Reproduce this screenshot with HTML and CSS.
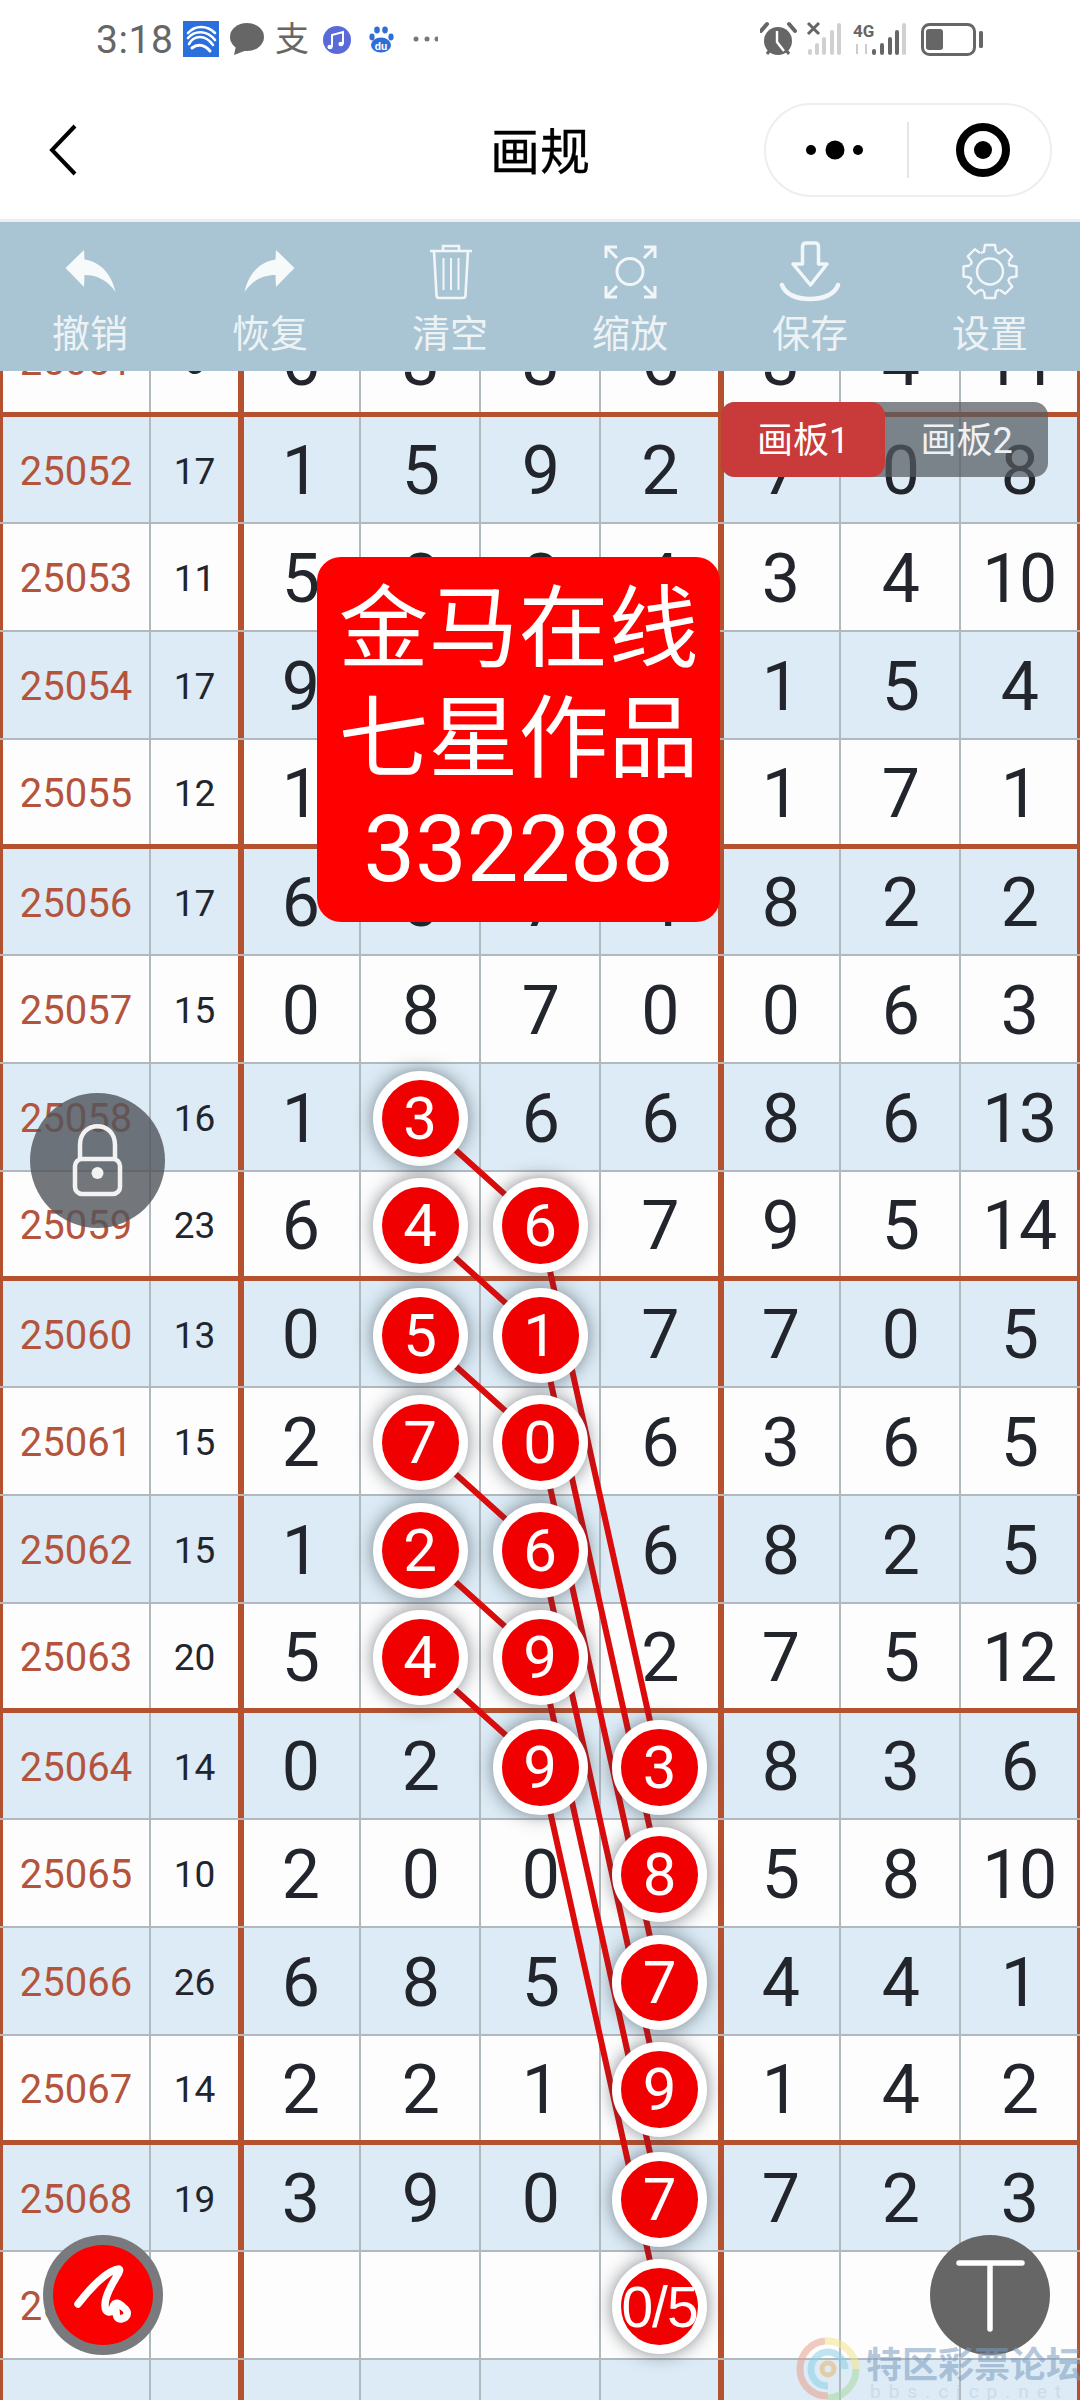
FILE: index.html
```html
<!DOCTYPE html>
<html lang="zh-CN">
<head>
<meta charset="utf-8">
<title>画规</title>
<link rel="stylesheet" href="styles.css">
</head>
<body>
<div class="app">
  <header class="status">
    <span class="time">3:18</span>
    <svg class="st-left" width="255" height="36" viewBox="183 21 255 36">
      <rect x="183" y="21" width="36" height="36" fill="#2a6fdb"/>
      <g fill="none" stroke="#fff" stroke-linecap="round">
        <path d="M188 33C195 25 207 25 215 33" stroke-width="2.6"/>
        <path d="M188 38C195 30 207 30 215 40" stroke-width="2.6"/>
        <path d="M189 44C194 35 205 34 213 45" stroke-width="2.6"/>
        <path d="M192 48C198 43 205 45 210 51" stroke-width="3"/>
      </g>
      <ellipse cx="247" cy="37" rx="17" ry="14" fill="#666"/>
      <path d="M236 46L234 55L247 50Z" fill="#666"/>
      <text x="275" y="51" class="st-zhi">支</text>
      <circle cx="337" cy="40" r="14" fill="#5a6ad8"/>
      <path d="M332 47V35L343 32V44" fill="none" stroke="#fff" stroke-width="2"/>
      <ellipse cx="330" cy="47" rx="2.6" ry="2.2" fill="#fff"/>
      <ellipse cx="341" cy="44" rx="2.6" ry="2.2" fill="#fff"/>
      <g fill="#2d6fd6">
        <ellipse cx="372" cy="37" rx="2.6" ry="3.4"/>
        <ellipse cx="377" cy="30" rx="2.8" ry="3.4"/>
        <ellipse cx="385" cy="30" rx="2.8" ry="3.4"/>
        <ellipse cx="391" cy="37" rx="2.6" ry="3.4"/>
        <ellipse cx="381" cy="45" rx="10" ry="7.6"/>
      </g>
      <text x="381" y="50" class="st-du">du</text>
      <g fill="#777">
        <circle cx="416" cy="39" r="2.5"/>
        <circle cx="427" cy="39" r="2.5"/>
        <circle cx="437" cy="39" r="2.5"/>
      </g>
    </svg>
    <svg class="st-right" width="224" height="36" viewBox="760 21 224 36">
      <circle cx="778" cy="41" r="14" fill="#666"/>
      <path d="M761 31L767 24M795 31L789 24" stroke="#666" stroke-width="4" stroke-linecap="round"/>
      <path d="M767 54L770 50M789 54L786 50" stroke="#666" stroke-width="3"/>
      <path d="M777 31V42L784 51" fill="none" stroke="#fff" stroke-width="2.4"/>
      <path d="M808 23L819 34M819 23L808 34" stroke="#666" stroke-width="3"/>
      <g fill="#d0d0d0">
        <rect x="808" y="49" width="4" height="6" rx="2"/>
        <rect x="815" y="43" width="4" height="12" rx="2"/>
        <rect x="822" y="37" width="4" height="18" rx="2"/>
        <rect x="830" y="30" width="4" height="25" rx="2"/>
        <rect x="837" y="23" width="4" height="32" rx="2"/>
      </g>
      <text x="853" y="37" class="st-4g">4G</text>
      <path d="M857 44V54M866 44V54" stroke="#ccc" stroke-width="2"/>
      <g fill="#666">
        <rect x="872" y="49" width="4" height="6" rx="2"/>
        <rect x="880" y="43" width="4" height="12" rx="2"/>
        <rect x="888" y="37" width="4" height="18" rx="2"/>
        <rect x="895" y="30" width="4" height="25" rx="2"/>
      </g>
      <rect x="902" y="23" width="4" height="32" rx="2" fill="#d0d0d0"/>
      <rect x="922.5" y="24.5" width="52" height="30" rx="7" fill="none" stroke="#666" stroke-width="3"/>
      <rect x="926" y="29" width="17" height="21" rx="3" fill="#666"/>
      <rect x="979" y="31" width="4" height="17" rx="1.5" fill="#666"/>
    </svg>
  </header>

  <nav class="nav">
    <svg class="back" width="30" height="52" viewBox="0 0 30 52">
      <path d="M26 2L3 26L26 50" fill="none" stroke="#000" stroke-width="4"/>
    </svg>
    <h1 class="title">画规</h1>
    <div class="capsule">
      <svg width="284" height="90" viewBox="766 105 284 90">
        <circle cx="811" cy="150" r="5"/>
        <circle cx="835" cy="150" r="9.5"/>
        <circle cx="858" cy="150" r="5"/>
        <rect x="907" y="122" width="2" height="56" fill="#e5e5e5"/>
        <circle cx="983" cy="150" r="23" fill="none" stroke="#000" stroke-width="8"/>
        <circle cx="983" cy="150" r="9"/>
      </svg>
    </div>
  </nav>

  <section class="toolbar">
    <div class="tool">
      <svg class="icon" width="60" height="60" viewBox="0 0 60 60">
        <path class="solid" d="M5.5 28L24 10L24.5 19.5C42 22 52 36 55.5 52C48 41 38 35 24.5 35L24 47Z"/>
      </svg>
      <span class="label">撤销</span>
    </div>
    <div class="tool">
      <svg class="icon" width="60" height="60" viewBox="0 0 60 60">
        <path class="solid" d="M54.500 28L36 10L35.500 19.500C18 22 8 36 4.500 52C12 41 22 35 35.500 35L36 47Z"/>
      </svg>
      <span class="label">恢复</span>
    </div>
    <div class="tool">
      <svg class="icon" width="60" height="60" viewBox="420 240 60 60">
        <g class="line" stroke-width="2.600">
          <path d="M430 251H472"/>
          <path d="M443 251V246H459V251"/>
          <path d="M434 251L436.500 295Q436.500 298 439 298H463Q465.500 298 465.500 295L468 251"/>
          <path d="M443.500 258V290M451 258V290M458.500 258V290" stroke-width="2"/>
        </g>
      </svg>
      <span class="label">清空</span>
    </div>
    <div class="tool">
      <svg class="icon" width="60" height="60" viewBox="600 240 60 60">
        <g class="line" stroke-width="3">
          <circle cx="630" cy="271.500" r="13"/>
          <path d="M606 258V247H617M606 247L617 258"/>
          <path d="M655 258V247H644M655 247L644 258"/>
          <path d="M606 286V297H617M606 297L617 286"/>
          <path d="M655 286V297H644M655 297L644 286"/>
        </g>
      </svg>
      <span class="label">缩放</span>
    </div>
    <div class="tool">
      <svg class="icon" width="60" height="60" viewBox="780 240 60 60">
        <g class="line" stroke-linejoin="round">
          <path stroke-width="3.500" d="M802.500 264V247Q802.500 243 806 243H815Q818.500 243 818.500 247V264H827L810.500 285L793 264Z"/>
          <path stroke-width="4.500" stroke-linecap="round" d="M782 285C785 294 796 299 810 299C824 299 835 294 838 285"/>
        </g>
      </svg>
      <span class="label">保存</span>
    </div>
    <div class="tool">
      <svg class="icon" width="60" height="60" viewBox="-30 -31.500 60 60">
        <g class="line" stroke-width="2.400" stroke-linejoin="round">
          <circle r="13"/>
          <circle r="20.500" stroke-dasharray="4.100 12" stroke-dashoffset="-6"/>
          <path d="M-6 -20L-5 -26.500H5L6 -20"/>
          <path d="M-6 -20L-5 -26.500H5L6 -20" transform="rotate(45)"/>
          <path d="M-6 -20L-5 -26.500H5L6 -20" transform="rotate(90)"/>
          <path d="M-6 -20L-5 -26.500H5L6 -20" transform="rotate(135)"/>
          <path d="M-6 -20L-5 -26.500H5L6 -20" transform="rotate(180)"/>
          <path d="M-6 -20L-5 -26.500H5L6 -20" transform="rotate(225)"/>
          <path d="M-6 -20L-5 -26.500H5L6 -20" transform="rotate(270)"/>
          <path d="M-6 -20L-5 -26.500H5L6 -20" transform="rotate(315)"/>
        </g>
      </svg>
      <span class="label">设置</span>
    </div>
  </section>

  <main class="board">
    <div class="sheet">
      <div class="row r4"><div class="c id">25051</div><div class="c sum">6</div><div class="c n">6</div><div class="c n">3</div><div class="c n">3</div><div class="c n">6</div><div class="c n">3</div><div class="c n">4</div><div class="c n">11</div></div>

      <div class="row r1 blue"><div class="c id">25052</div><div class="c sum">17</div><div class="c n">1</div><div class="c n">5</div><div class="c n">9</div><div class="c n">2</div><div class="c n">7</div><div class="c n">0</div><div class="c n">8</div></div>
      <div class="row r2"><div class="c id">25053</div><div class="c sum">11</div><div class="c n">5</div><div class="c n">8</div><div class="c n">8</div><div class="c n">4</div><div class="c n">3</div><div class="c n">4</div><div class="c n">10</div></div>
      <div class="row r3 blue"><div class="c id">25054</div><div class="c sum">17</div><div class="c n">9</div><div class="c n">2</div><div class="c n">3</div><div class="c n">3</div><div class="c n">1</div><div class="c n">5</div><div class="c n">4</div></div>
      <div class="row r4"><div class="c id">25055</div><div class="c sum">12</div><div class="c n">1</div><div class="c n">4</div><div class="c n">6</div><div class="c n">1</div><div class="c n">1</div><div class="c n">7</div><div class="c n">1</div></div>

      <div class="row r1 blue"><div class="c id">25056</div><div class="c sum">17</div><div class="c n">6</div><div class="c n">0</div><div class="c n">7</div><div class="c n">4</div><div class="c n">8</div><div class="c n">2</div><div class="c n">2</div></div>
      <div class="row r2"><div class="c id">25057</div><div class="c sum">15</div><div class="c n">0</div><div class="c n">8</div><div class="c n">7</div><div class="c n">0</div><div class="c n">0</div><div class="c n">6</div><div class="c n">3</div></div>
      <div class="row r3 blue"><div class="c id">25058</div><div class="c sum">16</div><div class="c n">1</div><div class="c n"><span class="ball">3</span></div><div class="c n">6</div><div class="c n">6</div><div class="c n">8</div><div class="c n">6</div><div class="c n">13</div></div>
      <div class="row r4"><div class="c id">25059</div><div class="c sum">23</div><div class="c n">6</div><div class="c n"><span class="ball">4</span></div><div class="c n"><span class="ball">6</span></div><div class="c n">7</div><div class="c n">9</div><div class="c n">5</div><div class="c n">14</div></div>

      <div class="row r1 blue"><div class="c id">25060</div><div class="c sum">13</div><div class="c n">0</div><div class="c n"><span class="ball">5</span></div><div class="c n"><span class="ball">1</span></div><div class="c n">7</div><div class="c n">7</div><div class="c n">0</div><div class="c n">5</div></div>
      <div class="row r2"><div class="c id">25061</div><div class="c sum">15</div><div class="c n">2</div><div class="c n"><span class="ball">7</span></div><div class="c n"><span class="ball">0</span></div><div class="c n">6</div><div class="c n">3</div><div class="c n">6</div><div class="c n">5</div></div>
      <div class="row r3 blue"><div class="c id">25062</div><div class="c sum">15</div><div class="c n">1</div><div class="c n"><span class="ball">2</span></div><div class="c n"><span class="ball">6</span></div><div class="c n">6</div><div class="c n">8</div><div class="c n">2</div><div class="c n">5</div></div>
      <div class="row r4"><div class="c id">25063</div><div class="c sum">20</div><div class="c n">5</div><div class="c n"><span class="ball">4</span></div><div class="c n"><span class="ball">9</span></div><div class="c n">2</div><div class="c n">7</div><div class="c n">5</div><div class="c n">12</div></div>

      <div class="row r1 blue"><div class="c id">25064</div><div class="c sum">14</div><div class="c n">0</div><div class="c n">2</div><div class="c n"><span class="ball">9</span></div><div class="c n"><span class="ball">3</span></div><div class="c n">8</div><div class="c n">3</div><div class="c n">6</div></div>
      <div class="row r2"><div class="c id">25065</div><div class="c sum">10</div><div class="c n">2</div><div class="c n">0</div><div class="c n">0</div><div class="c n"><span class="ball">8</span></div><div class="c n">5</div><div class="c n">8</div><div class="c n">10</div></div>
      <div class="row r3 blue"><div class="c id">25066</div><div class="c sum">26</div><div class="c n">6</div><div class="c n">8</div><div class="c n">5</div><div class="c n"><span class="ball">7</span></div><div class="c n">4</div><div class="c n">4</div><div class="c n">1</div></div>
      <div class="row r4"><div class="c id">25067</div><div class="c sum">14</div><div class="c n">2</div><div class="c n">2</div><div class="c n">1</div><div class="c n"><span class="ball">9</span></div><div class="c n">1</div><div class="c n">4</div><div class="c n">2</div></div>

      <div class="row r1 blue"><div class="c id">25068</div><div class="c sum">19</div><div class="c n">3</div><div class="c n">9</div><div class="c n">0</div><div class="c n"><span class="ball">7</span></div><div class="c n">7</div><div class="c n">2</div><div class="c n">3</div></div>
      <div class="row r2"><div class="c id">25069</div><div class="c sum"></div><div class="c n"></div><div class="c n"></div><div class="c n"></div><div class="c n"><span class="ball frac">0/5</span></div><div class="c n"></div><div class="c n"></div><div class="c n"></div></div>
      <div class="row r3 blue"><div class="c id"></div><div class="c sum"></div><div class="c n"></div><div class="c n"></div><div class="c n"></div><div class="c n"></div><div class="c n"></div><div class="c n"></div><div class="c n"></div></div>

      <svg class="links" width="1080" height="2092" viewBox="0 308 1080 2092">
        <g stroke="#dc0c0c" stroke-width="6" fill="none">
          <path d="M420 1118L540 1226M420 1226L540 1334M420 1334L540 1442M420 1442L540 1550M420 1550L540 1658M420 1658L540 1766"/>
          <path d="M540 1226L660 1766M540 1334L660 1874M540 1442L660 1982M540 1550L660 2090M540 1658L660 2198M540 1766L660 2306"/>
        </g>
      </svg>
    </div>

    <div class="tabs">
      <div class="tab active">画板1</div>
      <div class="tab">画板2</div>
    </div>

    <div class="promo">
      <div>金马在线</div>
      <div>七星作品</div>
      <div class="promo-num">332288</div>
    </div>

    <div class="fab lock">
      <svg width="135" height="135" viewBox="0 0 135 135">
        <g fill="none" stroke="#f2f2f2" stroke-width="4.500">
          <rect x="45" y="66" width="45" height="35" rx="7"/>
          <path d="M50 66V52C50 27 85 27 85 52V66"/>
        </g>
        <circle cx="67.500" cy="80" r="6" fill="#f2f2f2"/>
      </svg>
    </div>

    <div class="fab pen">
      <div class="pen-in">
        <svg width="100" height="100" viewBox="0 0 100 100">
          <path d="M25 59C38 42 55 25 66 24C70 26 52 44 52 60C52 68 58 70 60 62C62 56 66 58 70 62C76 66 76 72 68 74C64 74 63 70 63 66" fill="none" stroke="#fff" stroke-width="7.500" stroke-linecap="round" stroke-linejoin="round"/>
        </svg>
      </div>
    </div>

    <div class="fab text-btn">
      <svg width="120" height="120" viewBox="0 0 120 120">
        <path d="M29 28H92M60 28V94" fill="none" stroke="#fff" stroke-width="5.500" stroke-linecap="round"/>
      </svg>
    </div>

    <div class="mark">
      <svg class="mark-logo" width="66" height="66" viewBox="0 0 66 66">
        <g fill="none" stroke-width="7">
          <path d="M33 60C14 60 5 46 5 33C5 18 16 6 30 5" stroke="#e9a08c"/>
          <path d="M30 5C48 4 61 18 61 33" stroke="#f4e58c"/>
          <path d="M61 33C61 48 50 61 33 62" stroke="#a8dca0"/>
          <path d="M33 50C22 50 16 42 16 33C16 24 24 16 33 16C42 16 50 24 50 33" stroke="#8cd0e6"/>
          <circle cx="33" cy="33" r="6" stroke="#eab56c" stroke-width="5"/>
        </g>
      </svg>
      <div class="mark-text">
        <div class="mark-cn">特区彩票论坛</div>
        <div class="mark-en">bbs.cjcp.net</div>
      </div>
    </div>
  </main>
</div>
</body>
</html>
```

FILE: styles.css
```css
* { box-sizing: border-box; }
html, body { margin: 0; padding: 0; }
body {
  width: 1080px;
  height: 2400px;
  overflow: hidden;
  background: #fff;
  font-family: Roboto, "Noto Sans CJK SC", sans-serif;
}
.app { width: 1080px; height: 2400px; display: flex; flex-direction: column; }

/* status bar */
.status { height: 80px; flex: none; display: flex; align-items: center; padding: 0 96px 0 96px; }
.status svg { margin-top: -2px; }
.time { width: 87px; font-size: 39px; color: #666; letter-spacing: .6px; }
.st-right { margin-left: auto; }
.st-zhi { font-size: 34px; fill: #666; font-family: "Noto Sans CJK SC", sans-serif; }
.st-du { font-size: 11px; font-weight: 700; fill: #fff; text-anchor: middle; font-family: Roboto, sans-serif; }
.st-4g { font-size: 17px; font-weight: 700; fill: #666; font-family: Roboto, sans-serif; }

/* nav */
.nav {
  height: 142px;
  flex: none;
  display: grid;
  grid-template-columns: 1fr 100px 1fr;
  align-items: center;
  padding: 0 28px;
  border-bottom: 3px solid #eeeeee;
  background: #fff;
}
.back { display: block; margin-left: 21px; }
.title { margin: -4px 0 0; font-size: 50px; font-weight: 400; color: #000; line-height: 1; text-align: center; font-family: "Noto Sans CJK SC", sans-serif; -webkit-text-stroke: .3px #000; }
.capsule {
  justify-self: end;
  width: 288px;
  height: 94px;
  border: 2px solid #eee;
  border-radius: 47px;
  background: #fff;
}
.capsule svg { display: block; }

/* toolbar */
.toolbar {
  height: 149px;
  flex: none;
  display: grid;
  grid-template-columns: repeat(6, 180px);
  background: #a9c4d3;
  position: relative;
  z-index: 5;
}
.tool { display: flex; flex-direction: column; align-items: center; padding-top: 18px; }
.icon { display: block; overflow: visible; }
.solid { fill: #f7fafb; }
.line { fill: none; stroke: #f3f6f8; }
.label { margin-top: 9px; font-size: 38px; line-height: 44px; color: #edf2f5; font-family: "Noto Sans CJK SC", sans-serif; }

/* grid sheet */
.board { position: relative; flex: 1; overflow: hidden; }
.sheet { position: relative; margin-top: -63px; }
.row {
  display: grid;
  grid-template-columns: 151px 90px repeat(6, 120px) 119px;
  background: #fdfdfd;
  border-bottom: 2px solid #b0b9be;
}
.row.blue { background: #dcebf5; }
.r1 { height: 107px; }
.r2, .r3 { height: 108px; }
.r4 { height: 109px; border-bottom: 5px solid #b4512f; }

.c {
  display: flex;
  align-items: center;
  justify-content: center;
  padding-top: 3px;
  border-right: 2px solid #b0b9be;
  color: #22262c;
}
.c:nth-child(1) { border-left: 3px solid #b4512f; }
.c:nth-child(2), .c:nth-child(6) { border-right: 3px solid #b4512f; }
.c:nth-child(3), .c:nth-child(7) { border-left: 3px solid #b4512f; padding-right: 3px; }
.c:nth-child(9) { border-right: 3px solid #b4512f; }
.id { font-size: 40px; color: #b4543c; }
.sum { font-size: 37px; }
.n { font-size: 68px; letter-spacing: -1.5px; }

.ball {
  position: relative;
  z-index: 2;
  flex: none;
  width: 95px;
  height: 95px;
  display: flex;
  align-items: center;
  justify-content: center;
  border: 9px solid #fff;
  border-radius: 50%;
  background: #f00000;
  box-shadow: 0 0 18px rgba(50, 60, 70, .6);
  color: #fff;
  font-size: 60px;
  letter-spacing: 0;
}
.ball.frac { font-family: "Liberation Sans", sans-serif; font-size: 57px; letter-spacing: -1px; white-space: nowrap; }

.links { position: absolute; left: 0; top: 0; z-index: 1; pointer-events: none; }

/* overlays */
.tabs {
  position: absolute;
  z-index: 4;
  left: 721px;
  top: 31px;
  width: 327px;
  height: 75px;
  display: flex;
  border-radius: 14px;
  background: rgba(85, 90, 96, .72);
}
.tab {
  flex: 1;
  display: flex;
  align-items: center;
  justify-content: center;
  padding-bottom: 5px;
  font-size: 36px;
  color: #eef0f2;
  border-radius: 14px;
}
.tab.active { flex: none; width: 164px; background: #c93a3a; color: #fff; }

.promo {
  position: absolute;
  z-index: 4;
  left: 317px;
  top: 186px;
  width: 403px;
  height: 365px;
  display: flex;
  flex-direction: column;
  align-items: center;
  justify-content: center;
  background: #fe0000;
  border-radius: 24px;
  color: #fff;
  font-size: 90px;
  line-height: 110px;
}
.promo-num { font-size: 92px; }

.fab { position: absolute; z-index: 4; border-radius: 50%; }
.fab svg { display: block; }
.lock { left: 30px; top: 722px; width: 135px; height: 135px; background: rgba(80, 84, 90, .8); }
.pen {
  left: 43px;
  top: 1864px;
  width: 120px;
  height: 120px;
  display: flex;
  align-items: center;
  justify-content: center;
  background: #787a7e;
}
.pen-in { width: 100px; height: 100px; border-radius: 50%; background: #fa0000; }
.text-btn { left: 930px; top: 1864px; width: 120px; height: 120px; background: #666; }

.mark {
  position: absolute;
  z-index: 5;
  left: 795px;
  top: 1965px;
  display: flex;
  gap: 5px;
  opacity: .55;
}
.mark-logo { display: block; flex: none; }
.mark-text { width: 216px; }
.mark-cn { font-size: 36px; line-height: 36px; font-weight: 700; color: #7c9cc0; white-space: nowrap; font-family: "Noto Sans CJK SC", sans-serif; margin-top: 8px; }
.mark-en { font-size: 19px; line-height: 20px; letter-spacing: 8px; color: #bcd0e0; white-space: nowrap; margin-top: 2px; margin-left: 4px; }
```
